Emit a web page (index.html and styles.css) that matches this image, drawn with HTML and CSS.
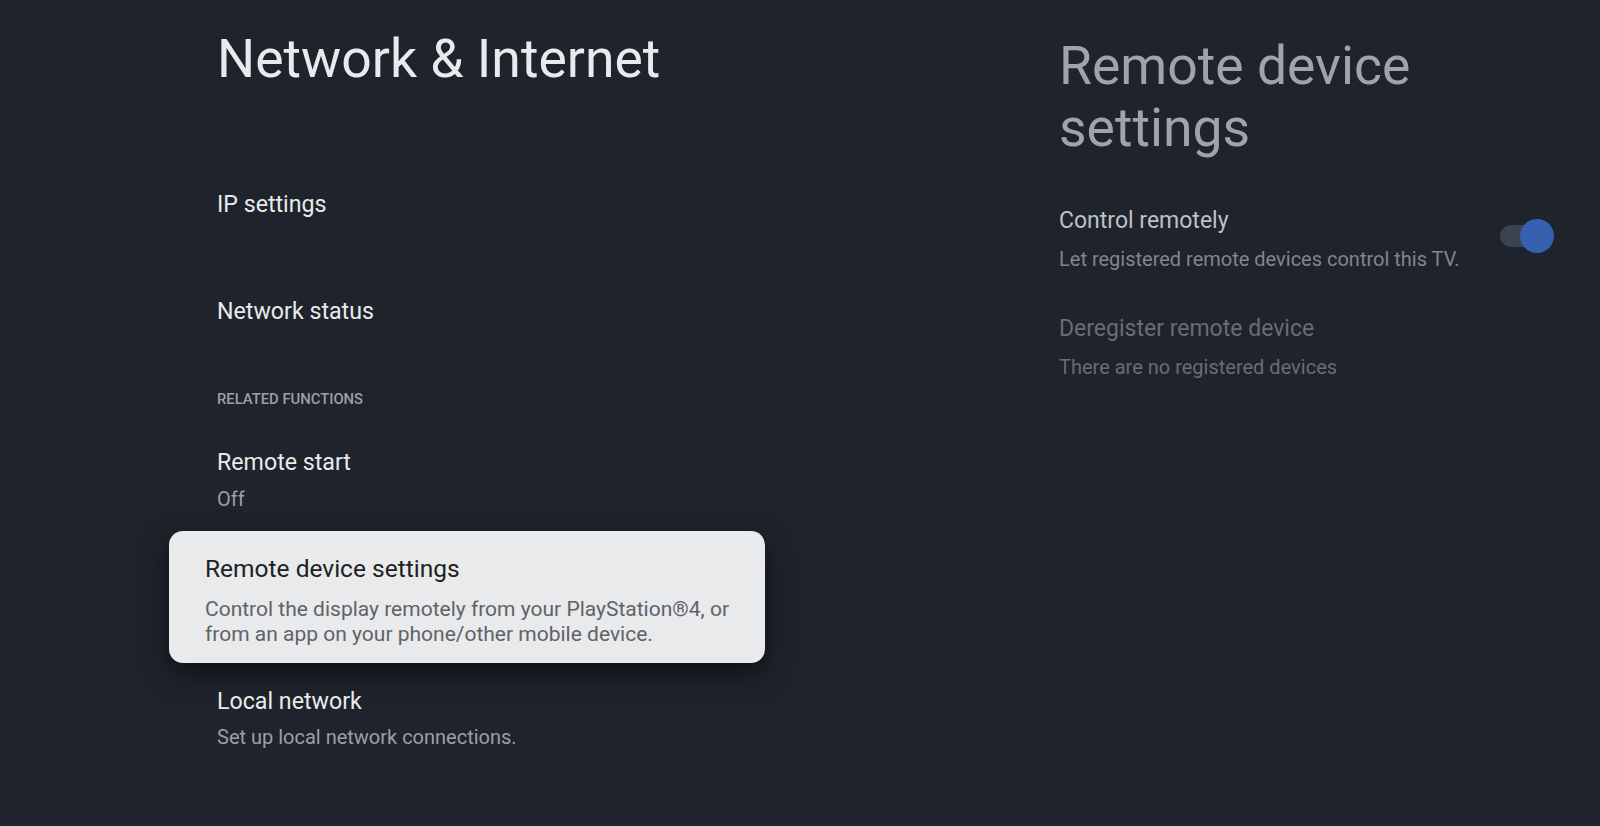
FILE: index.html
```html
<!DOCTYPE html>
<html lang="en">
<head>
  <meta charset="UTF-8">
  <title>Network &amp; Internet</title>
  <link rel="stylesheet" href="styles.css">
</head>
<body>

<div class="settings">
  <div class="menu">
    <h1 class="menu-title">Network &amp; Internet</h1>

    <div class="item item-ip">
      <div class="item-title">IP settings</div>
    </div>

    <div class="item item-status">
      <div class="item-title">Network status</div>
    </div>

    <div class="section-label">RELATED FUNCTIONS</div>

    <div class="item item-remote">
      <div class="item-title">Remote start</div>
      <div class="item-summary">Off</div>
    </div>

    <div class="item focused">
      <div class="item-title">Remote device settings</div>
      <div class="item-summary">Control the display remotely from your PlayStation®4, or from an app on your phone/other mobile device.</div>
    </div>

    <div class="item item-local">
      <div class="item-title">Local network</div>
      <div class="item-summary">Set up local network connections.</div>
    </div>
  </div>

  <div class="preview">
    <h2 class="preview-title">Remote device settings</h2>

    <div class="pref pref-control">
      <div class="pref-text">
        <div class="pref-title">Control remotely</div>
        <div class="pref-summary">Let registered remote devices control this TV.</div>
      </div>
      <div class="switch on"><span class="thumb"></span></div>
    </div>

    <div class="pref pref-deregister disabled">
      <div class="pref-text">
        <div class="pref-title">Deregister remote device</div>
        <div class="pref-summary">There are no registered devices</div>
      </div>
    </div>
  </div>
</div>

</body>
</html>
```

FILE: styles.css
```css
* {
  box-sizing: border-box;
  font-family: Roboto, "Noto Sans", sans-serif;
}

html, body {
  margin: 0;
  padding: 0;
  width: 100vw;
  height: 100vh;
  background-color: #1f232b;
  color: #e8eaed;
  overflow: hidden;
}

.settings {
  display: flex;
  height: 100vh;
}

/* left list */
.menu {
  flex: 0 0 1059px;
  padding: 27px 0 0 217px;
}

.menu-title {
  margin: 0;
  font-size: 53.5px;
  line-height: 64px;
  font-weight: 400;
  color: #e8eaed;
}

.item {
  width: 548px;
}

.item-title {
  font-size: 23.2px;
  line-height: 30px;
  color: #e8eaed;
}

.item-summary {
  margin-top: 9px;
  font-size: 20px;
  line-height: 26px;
  color: #9aa0a6;
}

.item-ip { margin-top: 98px; }
.item-status { margin-top: 77px; }
.item-remote { margin-top: 38px; }
.item-local { margin-top: 23px; }
.item-local .item-summary { margin-top: 8px; }

.section-label {
  margin-top: 63px;
  font-size: 14.8px;
  line-height: 20px;
  font-weight: 500;
  color: #9aa0a6;
}

.item.focused {
  margin: 19px 0 0 -48px;
  width: 596px;
  padding: 22px 36px 16px 36px;
  background-color: #e8eaeb;
  border-radius: 14px;
  box-shadow: 0 10px 28px rgba(0, 0, 0, 0.55);
}

.item.focused .item-title {
  font-size: 24.5px;
  line-height: 32px;
  color: #202124;
}

.item.focused .item-summary {
  margin-top: 12px;
  font-size: 21px;
  line-height: 25px;
  color: #5f6368;
}

/* right preview */
.preview {
  flex: 1;
  padding: 35px 46px 0 0;
}

.preview-title {
  margin: 0;
  font-size: 53.5px;
  line-height: 62px;
  font-weight: 400;
  color: #9fa3aa;
}

.pref {
  display: flex;
  justify-content: space-between;
  align-items: flex-start;
}

.pref-control { margin-top: 47px; }
.pref-deregister { margin-top: 42px; }

.pref-title {
  font-size: 23px;
  line-height: 30px;
  color: #bdc1c6;
}

.pref-summary {
  margin-top: 10px;
  font-size: 20px;
  line-height: 26px;
  color: #80868b;
}

.pref.disabled .pref-title,
.pref.disabled .pref-summary {
  color: #686d75;
}

.switch {
  position: relative;
  width: 54px;
  height: 34px;
  margin-top: 13px;
}

.switch::before {
  content: "";
  position: absolute;
  left: 0;
  top: 6px;
  width: 44px;
  height: 22px;
  border-radius: 11px;
  background-color: #3b4350;
}

.switch .thumb {
  position: absolute;
  right: 0;
  top: 0;
  width: 34px;
  height: 34px;
  border-radius: 50%;
  background-color: #3761b0;
}
```
